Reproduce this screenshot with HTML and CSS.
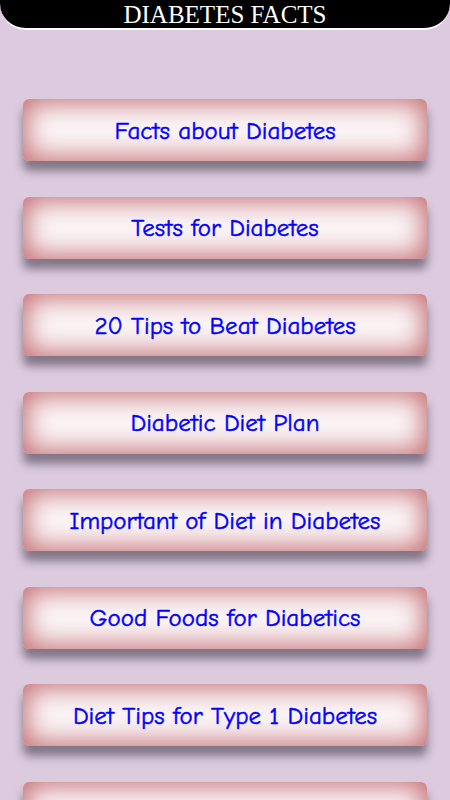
FILE: index.html
```html
<!DOCTYPE html>
<html lang="en">
<head>
<meta charset="UTF-8">
<meta name="viewport" content="width=device-width, initial-scale=1.0">
<title>Diabetes Facts</title>
<link rel="stylesheet" href="styles.css">
</head>
<body>
<div class="header">DIABETES FACTS</div>
<div class="menu">
  <a class="item" href="#">Facts about Diabetes</a>
  <a class="item" href="#">Tests for Diabetes</a>
  <a class="item" href="#">20 Tips to Beat Diabetes</a>
  <a class="item" href="#">Diabetic Diet Plan</a>
  <a class="item" href="#">Important of Diet in Diabetes</a>
  <a class="item" href="#">Good Foods for Diabetics</a>
  <a class="item" href="#">Diet Tips for Type 1 Diabetes</a>
  <a class="item" href="#">Diet Tips for Type 2 Diabetes</a>
</div>
</body>
</html>
```

FILE: styles.css
```css
body {
    margin: 0;
    padding: 0;
    background-color: #dccbdf;
    height: 800px;
    overflow: hidden;
}
.header {
    height: 28px;
    background-color: #000;
    color: #fff;
    border-bottom: 2px solid #fff;
    border-radius: 0 0 26px 26px;
    font-family: "Liberation Serif", "Times New Roman", serif;
    font-size: 25px;
    line-height: 30px;
    text-align: center;
    overflow: hidden;
}
.menu {
    display: flex;
    flex-direction: column;
    gap: 35.5px;
    padding: 69px 23px 0 23px;
}
.item {
    display: flex;
    justify-content: center;
    align-items: center;
    height: 62px;
    border-radius: 6px;
    background-color: #fbf5f7;
    box-shadow: inset 0 0 26px 4px rgba(190, 95, 100, 0.9), 0 10px 10px rgba(70, 60, 75, 0.6);
    color: #0000ff;
    text-decoration: none;
    font-family: "Comic Sans MS", "Comic Neue", "DejaVu Sans", sans-serif;
    font-size: 25px;
    -webkit-text-stroke: 0.5px #0000ff;
}
```
